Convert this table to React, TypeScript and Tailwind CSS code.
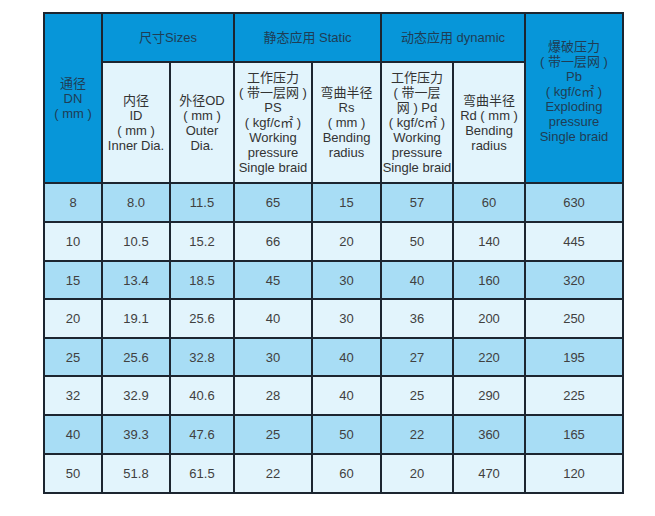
import React from "react";

const rows: string[][] = [
  ["8", "8.0", "11.5", "65", "15", "57", "60", "630"],
  ["10", "10.5", "15.2", "66", "20", "50", "140", "445"],
  ["15", "13.4", "18.5", "45", "30", "40", "160", "320"],
  ["20", "19.1", "25.6", "40", "30", "36", "200", "250"],
  ["25", "25.6", "32.8", "30", "40", "27", "220", "195"],
  ["32", "32.9", "40.6", "28", "40", "25", "290", "225"],
  ["40", "39.3", "47.6", "25", "50", "22", "360", "165"],
  ["50", "51.8", "61.5", "22", "60", "20", "470", "120"],
];

const rowHeights = ["h-[39px]", "h-[39px]", "h-[38px]", "h-[39px]", "h-[38px]", "h-[39px]", "h-[39px]", "h-[39px]"];

const subHeads = [
  "内径\nID\n( mm )\nInner Dia.",
  "外径OD\n( mm )\nOuter\nDia.",
  "工作压力\n( 带一层网 )\nPS\n( kgf/c㎡ )\nWorking\npressure\nSingle braid",
  "弯曲半径\nRs\n( mm )\nBending\nradius",
  "工作压力\n( 带一层\n网 ) Pd\n( kgf/c㎡ )\nWorking\npressure\nSingle braid",
  "弯曲半径\nRd ( mm )\nBending\nradius",
];

const cell = "border-2 border-[#1c2530] p-0 text-center align-middle";

export default function App(): React.ReactElement {
  return (
    <div
      className="h-[516px] w-[655px] bg-white pl-[43px] pt-[12px]"
      style={{ fontFamily: '"Liberation Sans", "Noto Sans CJK SC", sans-serif' }}
    >
      <table className="w-[579px] table-fixed border-collapse text-[13px] leading-[15px]">
        <colgroup>
          <col className="w-[58px]" />
          <col className="w-[68px]" />
          <col className="w-[64px]" />
          <col className="w-[78px]" />
          <col className="w-[69px]" />
          <col className="w-[72px]" />
          <col className="w-[72px]" />
          <col className="w-[98px]" />
        </colgroup>
        <thead>
          <tr className="h-[49px] bg-[#0796d9] text-[#1f3d55]">
            <th rowSpan={2} className={`${cell} whitespace-pre font-normal`}>
              {"通径\nDN\n( mm )"}
            </th>
            <th colSpan={2} className={`${cell} font-normal`}>尺寸Sizes</th>
            <th colSpan={2} className={`${cell} font-normal`}>静态应用 Static</th>
            <th colSpan={2} className={`${cell} font-normal`}>动态应用 dynamic</th>
            <th rowSpan={2} className={`${cell} whitespace-pre pb-[14px] font-normal`}>
              {"爆破压力\n( 带一层网 )\nPb\n( kgf/c㎡ )\nExploding\npressure\nSingle braid"}
            </th>
          </tr>
          <tr className="h-[121px] bg-[#e2f4fc] text-[#333]">
            {subHeads.map((t, i) => (
              <th key={i} className={`${cell} whitespace-pre font-normal`}>
                {t}
              </th>
            ))}
          </tr>
        </thead>
        <tbody className="text-[#404040]">
          {rows.map((r, i) => (
            <tr key={r[0]} className={`${rowHeights[i]} ${i % 2 === 0 ? "bg-[#a8ddf5]" : "bg-[#e2f4fc]"}`}>
              {r.map((v, j) => (
                <td key={j} className={cell}>
                  {v}
                </td>
              ))}
            </tr>
          ))}
        </tbody>
      </table>
    </div>
  );
}
